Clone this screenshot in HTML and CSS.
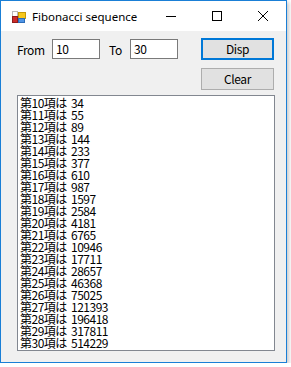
FILE: index.html
```html
<!DOCTYPE html>
<html lang="ja">
<head>
    <meta charset="UTF-8">
    <title>Fibonacci sequence</title>
    <link rel="stylesheet" href="styles.css">
</head>
<body>
    <div class="window">
        <div class="titlebar">
            <svg class="app-icon" width="16" height="16" viewBox="0 0 16 16">
                <rect x="1.5" y="2.5" width="5" height="5" fill="#ffffff" stroke="#b9b9b9"/>
                <rect x="1.5" y="7.5" width="5" height="6" fill="#cc2b2b" stroke="#8e1c1c"/>
                <rect x="7.5" y="3.5" width="7" height="6" fill="#f6c61c" stroke="#c49a0a"/>
                <rect x="7.5" y="9.5" width="6" height="4" fill="#4f95e6" stroke="#2c6cb8"/>
            </svg>
            <div class="title">Fibonacci sequence</div>
            <div class="caption-btn">
                <svg width="10" height="10" viewBox="0 0 10 10"><rect x="0" y="5" width="10" height="1" fill="#000"/></svg>
            </div>
            <div class="caption-btn">
                <svg width="10" height="10" viewBox="0 0 10 10"><rect x="0.5" y="0.5" width="9" height="9" fill="none" stroke="#000"/></svg>
            </div>
            <div class="caption-btn">
                <svg width="10" height="10" viewBox="0 0 10 10"><path d="M0 0 L10 10 M10 0 L0 10" stroke="#000" stroke-width="1"/></svg>
            </div>
        </div>

        <div class="client">
            <div class="top-row">
                <div class="inputs">
                    <span class="label label-from">From</span>
                    <div class="textbox">10</div>
                    <span class="label label-to">To</span>
                    <div class="textbox">30</div>
                </div>
                <div class="buttons">
                    <div class="button button-default">Disp</div>
                    <div class="button">Clear</div>
                </div>
            </div>

            <div class="listbox">
                <div class="item">第10項は 34</div>
                <div class="item">第11項は 55</div>
                <div class="item">第12項は 89</div>
                <div class="item">第13項は 144</div>
                <div class="item">第14項は 233</div>
                <div class="item">第15項は 377</div>
                <div class="item">第16項は 610</div>
                <div class="item">第17項は 987</div>
                <div class="item">第18項は 1597</div>
                <div class="item">第19項は 2584</div>
                <div class="item">第20項は 4181</div>
                <div class="item">第21項は 6765</div>
                <div class="item">第22項は 10946</div>
                <div class="item">第23項は 17711</div>
                <div class="item">第24項は 28657</div>
                <div class="item">第25項は 46368</div>
                <div class="item">第26項は 75025</div>
                <div class="item">第27項は 121393</div>
                <div class="item">第28項は 196418</div>
                <div class="item">第29項は 317811</div>
                <div class="item">第30項は 514229</div>
            </div>
        </div>
    </div>
</body>
</html>
```

FILE: styles.css
```css
* {
    margin: 0;
    padding: 0;
    box-sizing: border-box;
}

body {
    background: #ffffff;
    font-family: "Noto Sans CJK JP", sans-serif;
    font-size: 12px;
    color: #000000;
}

.window {
    width: 287px;
    height: 363px;
    border: 1px solid #1a7fd6;
    display: flex;
    flex-direction: column;
    box-shadow: 2px 2px 4px rgba(0, 0, 0, 0.22);
}

.titlebar {
    height: 30px;
    background: #ffffff;
    display: flex;
    align-items: center;
}

.app-icon {
    margin-left: 10px;
    margin-top: 1px;
}

.title {
    flex: 1;
    margin-left: 5px;
    font-family: "Noto Sans", sans-serif;
    font-size: 11.5px;
    color: #000000;
}

.caption-btn {
    width: 46px;
    height: 30px;
    display: flex;
    align-items: center;
    justify-content: center;
}

.client {
    flex: 1;
    background: #f0f0f0;
    padding: 7px 11px 11px 16px;
    display: flex;
    flex-direction: column;
}

.top-row {
    display: flex;
    justify-content: space-between;
}

.inputs {
    display: flex;
    align-items: center;
    height: 20px;
    margin-top: 1px;
}

.label {
    letter-spacing: -0.4px;
}

.label-from {
    width: 35px;
}

.label-to {
    width: 21px;
    margin-left: 9px;
}

.textbox {
    width: 48px;
    height: 20px;
    background: #ffffff;
    border: 1px solid #7a7a7a;
    padding-left: 3px;
    line-height: 18px;
    letter-spacing: -0.5px;
}

.buttons {
    display: flex;
    flex-direction: column;
    gap: 8px;
    margin-right: 1px;
}

.button {
    width: 73px;
    height: 22px;
    background: #e1e1e1;
    border: 1px solid #adadad;
    text-align: center;
    line-height: 20px;
    letter-spacing: -0.4px;
}

.button-default {
    border: 2px solid #0078d7;
    line-height: 18px;
}

.listbox {
    margin-top: 5px;
    flex: 1;
    background: #ffffff;
    border: 1px solid #828790;
    padding: 1px 2px;
    overflow: hidden;
}

.item {
    height: 12px;
    line-height: 12px;
    white-space: nowrap;
    letter-spacing: -0.5px;
    word-spacing: 2px;
}
```
